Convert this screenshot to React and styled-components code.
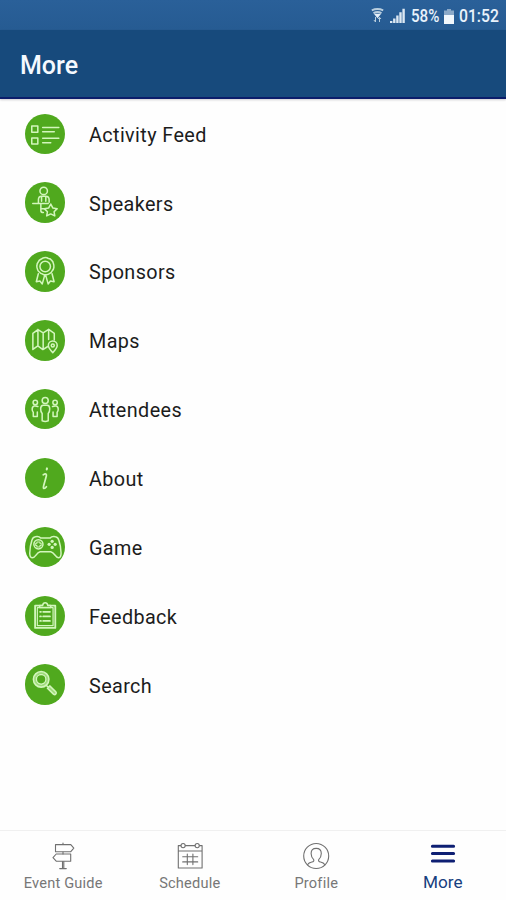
import React from 'react';
import styled, { createGlobalStyle } from 'styled-components';

const GlobalStyle = createGlobalStyle`
  * { box-sizing: border-box; }
  html, body { margin: 0; padding: 0; background: #fefefe; }
  body { font-family: Roboto, "Liberation Sans", sans-serif; }
`;

const Screen = styled.div`
  width: 506px;
  height: 900px;
  display: flex;
  flex-direction: column;
  overflow: hidden;
  background: #fefefe;
`;

const StatusBar = styled.div`
  height: 30px;
  flex: none;
  display: flex;
  align-items: center;
  justify-content: flex-end;
  padding: 2px 6px 0 0;
  background: linear-gradient(#2a6099, #265b92);
  color: #e9f2fb;
`;

const StatusIcon = styled.svg`
  display: block;
  flex: none;
  margin-right: ${(p) => p.$gap}px;
`;

const StatusText = styled.span`
  width: ${(p) => p.$width}px;
  margin-right: ${(p) => p.$gap || 0}px;
  white-space: nowrap;
  font: 500 18.5px/20px Roboto, sans-serif;
`;

const Condensed = styled.span`
  display: inline-block;
  transform: scaleX(${(p) => p.$scale});
  transform-origin: left center;
`;

const Header = styled.header`
  height: 69px;
  flex: none;
  display: flex;
  align-items: center;
  padding: 5px 20px 0;
  background: #174a7c;
  border-bottom: 2px solid #0b1d6b;
  box-shadow: 0 1px 2px rgba(40, 30, 50, 0.22);
`;

const Title = styled.h1`
  margin: 0;
  color: #f5f9ff;
  font-size: 25px;
  line-height: 30px;
  font-weight: 500;
`;

const Menu = styled.ul`
  flex: 1;
  margin: 0;
  padding: 0.3px 0 0;
  list-style: none;
`;

const MenuItem = styled.li`
  height: 68.87px;
  display: flex;
  align-items: center;
  padding: 0 25px 0 24.6px;
  gap: 24px;
`;

const Badge = styled.span`
  width: 40.4px;
  height: 40.4px;
  flex: none;
  border-radius: 50%;
  background: #50a91e;

  svg {
    display: block;
    width: 100%;
    height: 100%;
    fill: none;
    stroke: #d3f6bd;
    stroke-width: 1.5;
    stroke-linecap: round;
    stroke-linejoin: round;
  }
`;

const MenuLabel = styled.span`
  padding-top: 4px;
  color: #1c1c1c;
  font-size: 19.8px;
  line-height: 24px;
  letter-spacing: 0.4px;
`;

const TabBar = styled.nav`
  height: 70px;
  flex: none;
  display: grid;
  grid-template-columns: repeat(4, 1fr);
  border-top: 1px solid #f0f0f0;
`;

const Tab = styled.div`
  display: flex;
  flex-direction: column;
  align-items: center;
  padding-top: 10px;
  color: ${(p) => (p.$active ? '#17407f' : '#777')};

  svg {
    display: block;
    width: 30px;
    height: 30px;
    flex: none;
    fill: none;
    stroke: ${(p) => (p.$active ? '#0e1f73' : '#707070')};
    stroke-width: ${(p) => (p.$active ? 3 : 1.1)};
    stroke-linejoin: round;
    stroke-linecap: round;
  }
`;

const TabLabel = styled.span`
  margin-top: ${(p) => (p.$active ? 1 : 2)}px;
  white-space: nowrap;
  font-size: ${(p) => (p.$active ? 17.2 : 14.6)}px;
  line-height: 20px;
  letter-spacing: ${(p) => (p.$active ? 0 : 0.2)}px;
`;

const icons = {
  feed: (
    <>
      <path d="M6.7 12h6v6h-6zM6.7 23.7h6v6h-6z" />
      <path d="M17.5 13.3h16M17.5 17.6h11.5M17.5 24h16M17.5 28.5h8" />
    </>
  ),
  speakers: (
    <>
      <circle cx="18.5" cy="8.8" r="3.7" />
      <path d="M13.3 21v-3.5q0-3.5 3.2-3.5h4q3.4 0 3.4 3.5V20M16.4 14.8v4.2M20.6 14.8v4.2M7.7 21.4h15.3M15.7 22v6.5q0 1.8 2.5 1.8M16 26.5h3" />
      <path d="M25.5 21.8l2 3.9 4.4.7-3.1 3.1.7 4.1-4-2-4 2 .7-4.1-3.1-3.1 4.4-.7z" />
    </>
  ),
  sponsors: (
    <>
      <path d="M20 6.4q2 0 3.3 1.1 2 .1 3.1 1.8 1.5 1.2 1.7 3.1.8 1.9.5 3.8-.2 2-1.6 3.4-.8 1.9-2.6 2.7-1.5 1.3-3.4 1.2-2 .4-3.6-.7-2-.3-3.1-1.9-1.6-1.1-2-3-.9-1.7-.5-3.6 0-2 1.3-3.5.7-1.8 2.5-2.6Q18 6.4 20 6.4z" />
      <circle cx="20" cy="15.4" r="5.2" />
      <path d="M13.2 22.5l-2 8 3.6-.8 2.3 2.9 2.3-8.2M26.8 22.5l2 8-3.6-.8-2.3 2.9-2.3-8.2" />
    </>
  ),
  maps: (
    <>
      <path d="M22.2 26.5l-4.5 2.8-5-3.7-4.9 3.6V13.3l5-3.8 5.2 3.3 5.4-3.5 5.6 4v6.5M12.8 9.5v16M18 12.8v16.4M23.4 9.3v10" />
      <path d="M27.5 32.3q-4.4-4.5-4.4-7a4.4 4.4 0 0 1 8.8 0q0 2.5-4.4 7z" />
      <circle cx="27.5" cy="25.3" r="1.5" />
    </>
  ),
  attendees: (
    <>
      <circle cx="20" cy="11.4" r="3" />
      <path d="M18.1 16h3.8q2.5 0 2.6 3.5.1 2.9-1.5 4.8v7.2q-3 1.2-6 0v-7.2q-1.6-1.9-1.5-4.8.1-3.5 2.6-3.5z" />
      <circle cx="10.2" cy="13.3" r="2.2" />
      <circle cx="29.8" cy="13.3" r="2.2" />
      <path d="M12.8 17.4q-1-.8-3.6-.6-2 .3-2.1 3.2 0 2 1.1 3.1v4.2h4v-4.5M27.2 17.4q1-.8 3.6-.6 2 .3 2.1 3.2 0 2-1.1 3.1v4.2h-4v-4.5" />
    </>
  ),
  about: (
    <>
      <path d="M21.5 11.3l.3-1" strokeWidth="2" />
      <path d="M18 16.7q2.8-2 3.2.1.1.9-.6 3.1l-2 7q-.9 3.5.4 3.3 1 0 2.2-1.7" strokeWidth="1.7" />
    </>
  ),
  game: (
    <>
      <path d="M10.2 9.6q3.3-.9 5.5 1.4h9q2.2-2.3 5.5-1.4 2.6.5 3.3 3.3 2.1 6.5 2.2 12.9 0 4.8-2.5 4.6-1.7 0-3.6-2.6-2-2.8-4.1-3.3H15q-2.2.5-4.1 3.3-1.8 2.6-3.7 2.6-2.5.2-2.5-4.6.1-6.4 2.2-12.9.7-2.8 3.3-3.3z" />
      <circle cx="13.3" cy="17.2" r="4.5" />
      <path d="M11.8 14.8h3v1.4H16v2.2h-1.2v1.4h-3v-1.4h-1.2v-2.2h1.2z" strokeWidth="1" />
      <g fill="#d3f6bd" stroke="none">
        <circle cx="26.9" cy="14.2" r="1.6" />
        <circle cx="26.9" cy="20.2" r="1.6" />
        <circle cx="23.9" cy="17.2" r="1.6" />
        <circle cx="29.9" cy="17.2" r="1.6" />
      </g>
    </>
  ),
  feedback: (
    <>
      <path d="M10 9.6h20v22H10z" strokeWidth="1.8" />
      <path d="M12.2 11.6h15.6v17.8H12.2z" strokeWidth="1.2" />
      <path d="M14.5 11.5V9.3h3q.4-2.6 2.5-2.6t2.5 2.6h3v2.2z" fill="#50a91e" />
      <path d="M15 15.7h.8M15 20.2h.8M15 24.7h.8M18 15.7h6.7M18 20.2h6.7M18 24.7h6.7" strokeWidth="1.8" />
    </>
  ),
  search: (
    <>
      <circle cx="16" cy="15.2" r="6.5" stroke="#9fdb7c" strokeWidth="2" />
      <circle cx="16" cy="15.2" r="7.7" />
      <circle cx="16" cy="15.2" r="4.8" />
      <path d="M21 21l2 2M22.2 24l2.3-2.3 6 5.8q1 1.2 0 2.3t-2.3 0z" fill="#9fdb7c" />
    </>
  ),
  guide: (
    <>
      <path d="M15 2v1M15 11v2M14.5 20.5v6.5M15.8 20.5v6.5M11.7 27.6h6.6" />
      <path d="M7.5 3.6h15.3l3 3.5-3 3.6H7.5zM22.7 13H8.2L5 16.7l3.2 3.5h14.5z" />
    </>
  ),
  schedule: (
    <>
      <path d="M5.7 4.6H3.3V27h23.8V4.6h-2.4M10.5 4.6h9.3M3.3 10h23.8" />
      <circle cx="8.1" cy="4.6" r="2.1" />
      <circle cx="22.2" cy="4.6" r="2.1" />
      <path d="M7.7 15.7h15M7.7 20.9h15M12.3 13v10.6M17.9 13v10.6" />
    </>
  ),
  profile: (
    <>
      <circle cx="15.2" cy="15" r="12.5" />
      <path d="M6.5 23.8q1.2-2.2 4.4-2.8 2.5-.5 1.8-2.4-2.6-2.4-2.6-6 0-5.2 5.1-5.2t5.1 5.2q0 3.6-2.6 6-.7 1.9 1.8 2.4 3.2.6 4.4 2.8" />
    </>
  ),
  menu: <path d="M4.4 5.2h21.2M4.4 12.6h21.2M4.4 20h21.2" />,
};

const menuItems = [
  ['feed', 'Activity Feed'],
  ['speakers', 'Speakers'],
  ['sponsors', 'Sponsors'],
  ['maps', 'Maps'],
  ['attendees', 'Attendees'],
  ['about', 'About'],
  ['game', 'Game'],
  ['feedback', 'Feedback'],
  ['search', 'Search'],
];

const tabs = [
  ['guide', 'Event Guide'],
  ['schedule', 'Schedule'],
  ['profile', 'Profile'],
  ['menu', 'More'],
];

export default function App() {
  return (
    <>
      <GlobalStyle />
      <Screen>
        <StatusBar>
          <StatusIcon $gap={6} width="13" height="16" viewBox="0 0 13 16" fill="none" stroke="#b9cede" strokeWidth="1.5">
            <path d="M.8 2.3q5.7-2.6 11.4 0M2.5 5.1q4-2.2 8 0" strokeWidth="1.9" />
            <path d="M2.9 5.8h7.2L6.5 10.2z" fill="#e5eff8" stroke="none" />
            <path d="M4.5 9v5M2.9 12l1.6 2M8.5 14V9.5M7 11l1.5-1.7L10 11" strokeWidth="1" />
          </StatusIcon>
          <StatusIcon $gap={6} width="15" height="16" viewBox="0 0 15 16" fill="#dce8f3">
            <path d="M0 13h2.4v2H0zM3.1 10.5h2.4V15H3.1zM6.2 7.5h2.4V15H6.2zM9.3 4.3h2.4V15H9.3zM12.4.8h2.4V15h-2.4z" />
          </StatusIcon>
          <StatusText $width={29} $gap={4}><Condensed $scale={0.82}>58%</Condensed></StatusText>
          <StatusIcon $gap={5} width="10" height="15" viewBox="0 0 10 15">
            <path d="M3 0h4v1.5h3V15H0V1.5h3z" fill="#8ba9c8" />
            <path d="M0 6h10v9H0z" fill="#f1f7fc" />
          </StatusIcon>
          <StatusText $width={41}><Condensed $scale={0.85}>01:52</Condensed></StatusText>
        </StatusBar>
        <Header><Title>More</Title></Header>
        <Menu>
          {menuItems.map(([icon, label]) => (
            <MenuItem key={label}>
              <Badge><svg viewBox="0 0 40 40">{icons[icon]}</svg></Badge>
              <MenuLabel>{label}</MenuLabel>
            </MenuItem>
          ))}
        </Menu>
        <TabBar>
          {tabs.map(([icon, label]) => (
            <Tab key={label} $active={icon === 'menu'}>
              <svg viewBox="0 0 30 30">{icons[icon]}</svg>
              <TabLabel $active={icon === 'menu'}>{label}</TabLabel>
            </Tab>
          ))}
        </TabBar>
      </Screen>
    </>
  );
}
